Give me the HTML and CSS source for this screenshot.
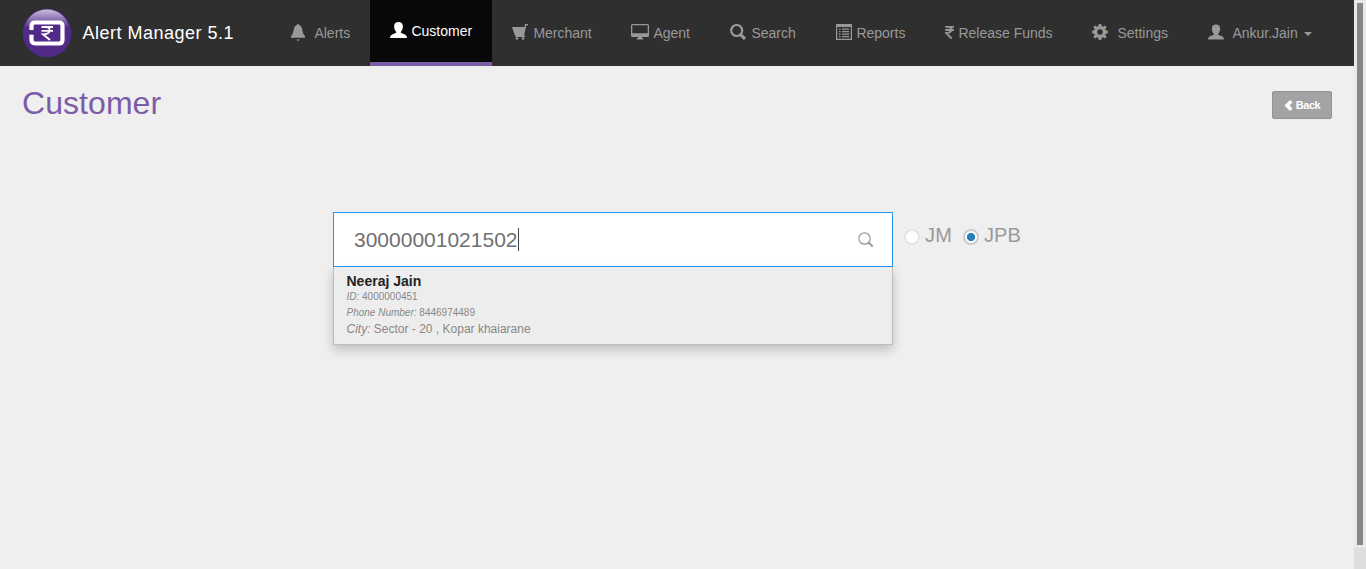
FILE: index.html
```html
<!DOCTYPE html>
<html lang="en">
<head>
<meta charset="utf-8">
<title>Alert Manager</title>
<link rel="stylesheet" href="styles.css">
</head>
<body>
<div class="app">
  <div class="page">
    <header class="navbar">
      <svg class="logo" viewBox="0 0 50 50">
        <defs>
          <linearGradient id="gloss" x1="0" y1="0" x2="0" y2="1">
            <stop offset="0" stop-color="#fff" stop-opacity=".7"/>
            <stop offset="1" stop-color="#fff" stop-opacity=".05"/>
          </linearGradient>
        </defs>
        <circle cx="25" cy="25" r="24.3" fill="#512a88"/>
        <path d="M25 1.500C13 1.500 5 9.500 3 19Q25 15 47 19C45 9.500 37 1.500 25 1.500Z" fill="url(#gloss)"/>
        <path d="M9.500 22V18Q9.500 14.500 13 14.500H37Q40.500 14.500 40.500 18V32Q40.500 35.500 37 35.500H13Q9.500 35.500 9.500 32V26.500" fill="#512a88" stroke="#fff" stroke-width="4.200" stroke-linejoin="round"/>
        <path d="M8 22.500H12L14 24.500L12 26.500H8Z" fill="#512a88"/>
        <path d="M19.500 19H31M19.500 22.800H31M20 19H23.500Q28 19.300 27.700 22.600Q27 26.300 21 26.300L28 32" fill="none" stroke="#fff" stroke-width="1.800"/>
      </svg>
      <span class="brand">Alert Manager 5.1</span>
      <nav class="menu">
        <a class="item alerts"><svg class="icon" viewBox="0 0 16 17"><path d="M8 0Q9 0 9.200 1C11 1.700 12 3.500 12.400 6C12.900 9 13.200 10.500 15 12V13.800H1V12C2.800 10.500 3.100 9 3.600 6C4 3.500 5 1.700 6.800 1Q7 0 8 0ZM6.300 15.600H9.700Q9 16.800 8 16.800Q7 16.800 6.300 15.600Z"/></svg><span class="label">Alerts</span></a>
        <a class="item customer"><svg class="icon" viewBox="0 0 17 16"><path d="M8.500 0C11.200 0 12.900 1.500 12.900 4.200C12.900 7 12 8.500 10.900 9.800V10.800L15.300 12.800Q17 13.700 17 16H0Q0 13.700 1.700 12.800L6.100 10.800V9.800C5 8.500 4.100 7 4.100 4.200C4.100 1.500 5.800 0 8.500 0Z"/></svg><span class="label">Customer</span></a>
        <a class="item merchant"><svg class="icon" viewBox="0 0 16 16"><path d="M0 3H12.500L13.100 0H16V1.300H14.400L12 11.500H13V13H3.500V11.700H3Z"/><circle cx="5" cy="14.500" r="1.300"/><circle cx="11" cy="14.500" r="1.300"/></svg><span class="label">Merchant</span></a>
        <a class="item agent"><svg class="icon" viewBox="0 0 18 16"><path fill-rule="evenodd" d="M1.500 0H16.500Q18 0 18 1.500V11.500Q18 13 16.500 13H11V14L12.500 15V15.500H5.500V15L7 14V13H1.500Q0 13 0 11.500V1.500Q0 0 1.500 0ZM1.300 1.300V9.300H16.700V1.300Z"/></svg><span class="label">Agent</span></a>
        <a class="item search"><svg class="icon" viewBox="0 0 16 16"><path d="M10.600 10.600L15 15" fill="none" stroke="currentColor" stroke-width="3.200"/><circle cx="6.700" cy="6.500" r="5.500" fill="none" stroke="currentColor" stroke-width="2.200"/></svg><span class="label">Search</span></a>
        <a class="item reports"><svg class="icon" viewBox="0 0 16 16"><path fill-rule="evenodd" d="M0 0H16V16H0ZM1.200 3V14.800H14.800V3Z"/><path d="M3 4.500H4.500V5.700H3ZM6 4.500H13V5.700H6ZM3 7H4.500V8.200H3ZM6 7H13V8.200H6ZM3 9.500H4.500V10.700H3ZM6 9.500H13V10.700H6ZM3 12H4.500V13.200H3ZM6 12H13V13.200H6Z"/></svg><span class="label">Reports</span></a>
        <a class="item funds"><svg class="icon" viewBox="0 0 9 13"><path d="M.2 .9H9M.2 4H9M.5 .9H3Q6.500 1.200 6.300 4Q6 7 1 7L6.700 12.500" fill="none" stroke="currentColor" stroke-width="1.900"/></svg><span class="label">Release Funds</span></a>
        <a class="item settings"><svg class="icon" viewBox="0 0 16 16"><path fill-rule="evenodd" d="M6.700 0H9.300L9.700 2.200L11 2.700L12.800 1.400L14.600 3.200L13.300 5L13.800 6.300L16 6.700V9.300L13.800 9.700L13.300 11L14.600 12.800L12.800 14.600L11 13.300L9.700 13.800L9.300 16H6.700L6.300 13.800L5 13.300L3.200 14.600L1.400 12.800L2.700 11L2.200 9.700L0 9.300V6.700L2.200 6.300L2.700 5L1.400 3.200L3.200 1.400L5 2.700L6.300 2.200ZM8 5.200A2.800 2.800 0 1 0 8 10.800A2.800 2.800 0 1 0 8 5.200Z"/></svg><span class="label">Settings</span></a>
        <a class="item user"><svg class="icon" viewBox="0 0 17 16"><path d="M8.500 0C11.200 0 12.900 1.500 12.900 4.200C12.900 7 12 8.500 10.900 9.800V10.800L15.300 12.800Q17 13.700 17 16H0Q0 13.700 1.700 12.800L6.100 10.800V9.800C5 8.500 4.100 7 4.100 4.200C4.100 1.500 5.800 0 8.500 0Z"/></svg><span class="label">Ankur.Jain</span><span class="caret"></span></a>
      </nav>
    </header>
    <div class="heading">
      <h1 class="title">Customer</h1>
      <button class="back"><svg class="chevron" viewBox="0 0 9 11"><path d="M6 0L8.500 2.500L5.500 5.500L8.500 8.500L6 11L.5 5.500Z"/></svg>Back</button>
    </div>
    <main class="lookup">
      <div class="combo">
        <div class="field">
          <span class="value">30000001021502</span><span class="cursor"></span>
          <svg class="find" viewBox="0 0 16 16"><circle cx="6.500" cy="6.500" r="5.700" fill="none" stroke="#999" stroke-width="1.200"/><path d="M10.500 10.500L14.700 14.500" stroke="#999" stroke-width="1.900"/></svg>
        </div>
        <div class="results">
          <div class="name">Neeraj Jain</div>
          <div class="detail"><i>ID:</i> 4000000451</div>
          <div class="detail"><i>Phone Number:</i> 8446974489</div>
          <div class="city"><i>City:</i> Sector - 20 , Kopar khaiarane</div>
        </div>
      </div>
      <div class="options">
        <span class="radio"></span><span class="choice">JM</span>
        <span class="radio checked"></span><span class="choice">JPB</span>
      </div>
    </main>
  </div>
  <div class="scrollbar"><div class="thumb"></div><div class="corner"></div></div>
</div>
</body>
</html>
```
FILE: styles.css
```css
* { box-sizing: border-box; }
body { margin: 0; background: #efefef; font-family: "Liberation Sans", Arial, sans-serif; color: #999; overflow: hidden; }
.app { display: flex; height: 569px; }
.page { width: 1354px; }
.navbar { display: flex; align-items: center; height: 66px; padding: 0 22px; background: #2f2f2f; }
.logo { width: 50px; height: 50px; flex: none; }
.brand { margin-left: 10.5px; width: 167.5px; color: #fff; font-size: 18px; letter-spacing: .5px; padding-top: 1px; white-space: nowrap; }
.menu { display: flex; margin-left: 20px; height: 66px; }
.item { display: flex; align-items: center; padding: 0 20px; font-size: 14px; white-space: nowrap; flex: none; }
.label { margin-left: .4px; }
.icon { width: 16px; height: 16px; fill: currentColor; margin-right: 5px; margin-top: -2px; flex: none; }
.alerts { width: 100px; }
.alerts .icon { height: 17px; margin-right: 8px; }
.customer { width: 122px; background: #080808; color: #fff; border-bottom: 4px solid #7b5ca7; }
.customer .icon { width: 17px; margin-right: 4px; }
.merchant { width: 119px; }
.agent { width: 99px; }
.agent .icon { width: 18px; margin-right: 4px; }
.search { width: 106px; }
.reports { width: 109px; }
.reports .icon { margin-right: 4px; }
.funds { width: 147px; }
.funds .icon { width: 9px; height: 13px; margin-right: 4px; }
.settings { width: 116px; }
.settings .icon { margin-right: 9px; }
.user { width: 144px; }
.user .icon { margin-right: 8px; }
.caret { margin: 2px 0 0 6px; border: 4px solid transparent; border-top-color: currentColor; border-bottom: 0; }
.heading { display: flex; justify-content: space-between; align-items: flex-start; padding: 18px 22px 0; height: 146px; }
.title { margin: 0; font-size: 32px; letter-spacing: .06px; line-height: 38px; font-weight: 400; color: #7b5ca7; }
.back { display: flex; align-items: center; justify-content: center; width: 60px; height: 28px; margin-top: 7px; padding: 0; border: 1px solid #939393; border-radius: 2px; background: #a3a3a5; color: #fff; font: bold 11px "Liberation Sans", Arial, sans-serif; letter-spacing: -.4px; }
.chevron { width: 9px; height: 11px; margin-right: 3px; fill: #fff; }
.lookup { display: flex; align-items: flex-start; padding-left: 333px; }
.combo { width: 560px; }
.field { display: flex; align-items: center; height: 55px; padding: 0 18px 0 20px; border: 1px solid #2196f3; background: #fff; color: #707070; font-size: 21px; }
.cursor { width: 1px; height: 23px; background: #444; }
.find { width: 16px; height: 16px; margin-left: auto; }
.results { height: 78px; padding: 6px 12.5px; border: 1px solid #bdbdbd; border-top: 0; background: #ededed; color: #888; box-shadow: 0 5px 10px rgba(0,0,0,.2); white-space: nowrap; }
.name { color: #222; font-size: 14px; font-weight: 700; line-height: 16px; }
.detail { font-size: 10px; line-height: 16px; }
.city { font-size: 12px; line-height: 16px; }
.options { display: flex; align-items: center; padding: 11px 0 0 11px; font-size: 20px; line-height: 24px; }
.radio { width: 16px; height: 16px; margin-top: 4px; border: 2px solid #e5e5e5; border-radius: 50%; background: #fff; flex: none; }
.checked { border-color: #ccc; background: radial-gradient(circle, #2980b9 3.8px, #fff 4.4px); }
.choice { margin-left: 5px; margin-right: 11px; letter-spacing: .15px; }
.scrollbar { width: 12px; background: #e9e9e9; padding-top: 3px; }
.thumb { width: 6px; height: 542px; margin-left: 3px; background: #878787; }
.corner { height: 21px; margin-top: 3px; background: #dedede; }
```
